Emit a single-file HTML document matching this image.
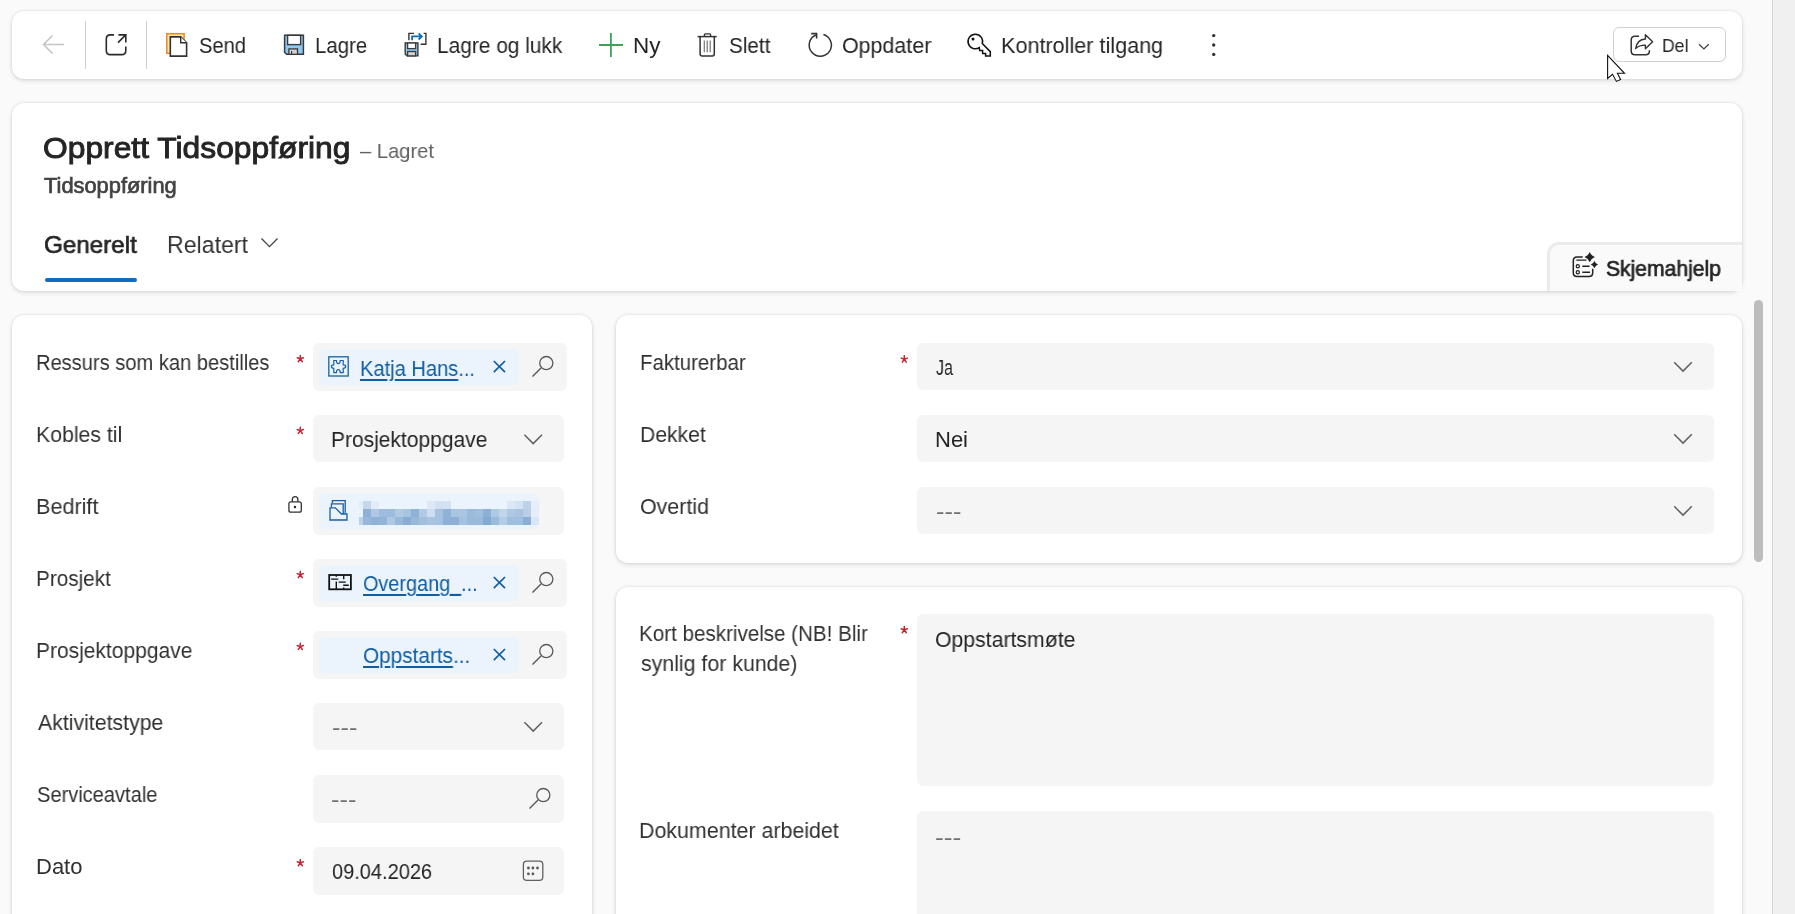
<!DOCTYPE html>
<html><head><meta charset="utf-8"><title>Opprett Tidsoppføring</title>
<style>
html,body{margin:0;padding:0;}
body{width:1795px;height:914px;overflow:hidden;position:relative;background:#fafafa;font-family:"Liberation Sans",sans-serif;}
.a{position:absolute;box-sizing:border-box;}
.t{position:absolute;white-space:nowrap;line-height:1;transform-origin:0 0;will-change:transform;}
.card{position:absolute;background:#fff;border-radius:12px;box-shadow:0 0 3px rgba(0,0,0,0.12),0 2px 5px rgba(0,0,0,0.10);}
.fld{position:absolute;background:#f5f5f5;border-radius:6px;}
.pill{position:absolute;background:#ebf3fc;border-radius:6px;}
.sep{position:absolute;width:1px;background:#d1d1d1;}
.ast{position:absolute;}

</style></head><body>
<div class="a" style="left:1772px;top:0;width:1px;height:914px;background:#d4d4d4"></div>
<div class="a" style="left:1773px;top:0;width:22px;height:914px;background:#f0f0f0"></div>
<div class="a" style="left:1754px;top:300px;width:9px;height:262px;border-radius:4.5px;background:#bdbdbd"></div>
<!-- toolbar -->
<div class="card" style="left:12px;top:11px;width:1730px;height:68px"></div>
<div class="sep" style="left:85px;top:21px;height:48px"></div>
<div class="sep" style="left:146px;top:21px;height:48px"></div>
<div class="a" style="left:1613px;top:27px;width:113px;height:35px;border:1px solid #d1d1d1;border-radius:6px"></div>
<!-- header -->
<div class="card" style="left:12px;top:103px;width:1730px;height:188px"></div>
<div class="a" style="left:45px;top:278px;width:92px;height:4px;border-radius:2px;background:#0f6cbd"></div>
<div class="a" style="left:1547px;top:242px;width:195px;height:49px;border:3px solid #ebebeb;border-right:none;border-bottom:none;border-top-left-radius:12px;background:#fafafa"></div>
<!-- cards -->
<div class="card" style="left:12px;top:315px;width:580px;height:700px"></div>
<div class="card" style="left:616px;top:315px;width:1126px;height:248px"></div>
<div class="card" style="left:616px;top:587px;width:1126px;height:500px"></div>
<!-- left fields -->
<div class="fld" style="left:313px;top:343px;width:254px;height:48px"></div>
<div class="fld" style="left:313px;top:415px;width:251px;height:47px"></div>
<div class="fld" style="left:313px;top:487px;width:251px;height:48px"></div>
<div class="fld" style="left:313px;top:559px;width:254px;height:48px"></div>
<div class="fld" style="left:313px;top:631px;width:254px;height:48px"></div>
<div class="fld" style="left:313px;top:703px;width:251px;height:47px"></div>
<div class="fld" style="left:313px;top:775px;width:251px;height:48px"></div>
<div class="fld" style="left:313px;top:847px;width:251px;height:48px"></div>
<div class="pill" style="left:319px;top:349px;width:200px;height:36px"></div>
<div class="pill" style="left:319px;top:493px;width:220px;height:36px"></div>
<div class="pill" style="left:319px;top:565px;width:200px;height:36px"></div>
<div class="pill" style="left:319px;top:637px;width:200px;height:36px"></div>
<!-- right fields -->
<div class="fld" style="left:917px;top:343px;width:797px;height:47px"></div>
<div class="fld" style="left:917px;top:415px;width:797px;height:47px"></div>
<div class="fld" style="left:917px;top:487px;width:797px;height:47px"></div>
<div class="fld" style="left:917px;top:614px;width:797px;height:172px"></div>
<div class="fld" style="left:917px;top:811px;width:797px;height:200px"></div>
<div class="a" style="left:359px;top:501px;width:4px;height:8px;background:#e3edf8"></div><div class="a" style="left:363px;top:501px;width:8px;height:8px;background:#c4d7ec"></div><div class="a" style="left:371px;top:501px;width:8px;height:8px;background:#e2ecf7"></div><div class="a" style="left:427px;top:501px;width:8px;height:8px;background:#dce8f5"></div><div class="a" style="left:435px;top:501px;width:8px;height:8px;background:#d2e1f1"></div><div class="a" style="left:443px;top:501px;width:8px;height:8px;background:#d4e2f1"></div><div class="a" style="left:507px;top:501px;width:8px;height:8px;background:#dde8f5"></div><div class="a" style="left:515px;top:501px;width:8px;height:8px;background:#d4e2f1"></div><div class="a" style="left:523px;top:501px;width:8px;height:8px;background:#bcd2ea"></div><div class="a" style="left:531px;top:501px;width:8px;height:8px;background:#e5eef9"></div><div class="a" style="left:363px;top:509px;width:8px;height:8px;background:#8cb0d6"></div><div class="a" style="left:371px;top:509px;width:8px;height:8px;background:#afc9e4"></div><div class="a" style="left:379px;top:509px;width:8px;height:8px;background:#9dbcdd"></div><div class="a" style="left:387px;top:509px;width:8px;height:8px;background:#9dbcdd"></div><div class="a" style="left:395px;top:509px;width:8px;height:8px;background:#b0cae4"></div><div class="a" style="left:403px;top:509px;width:8px;height:8px;background:#a7c4e1"></div><div class="a" style="left:411px;top:509px;width:8px;height:8px;background:#8fb2d7"></div><div class="a" style="left:419px;top:509px;width:8px;height:8px;background:#b1cbe5"></div><div class="a" style="left:427px;top:509px;width:8px;height:8px;background:#cddef0"></div><div class="a" style="left:435px;top:509px;width:8px;height:8px;background:#a5c3e0"></div><div class="a" style="left:443px;top:509px;width:8px;height:8px;background:#8fb2d7"></div><div class="a" style="left:451px;top:509px;width:8px;height:8px;background:#a9c5e1"></div><div class="a" style="left:459px;top:509px;width:8px;height:8px;background:#a9c5e1"></div><div class="a" style="left:467px;top:509px;width:8px;height:8px;background:#99badb"></div><div class="a" style="left:475px;top:509px;width:8px;height:8px;background:#a0bfde"></div><div class="a" style="left:483px;top:509px;width:8px;height:8px;background:#8eb0d6"></div><div class="a" style="left:491px;top:509px;width:8px;height:8px;background:#adc9e4"></div><div class="a" style="left:499px;top:509px;width:8px;height:8px;background:#c2d6eb"></div><div class="a" style="left:507px;top:509px;width:8px;height:8px;background:#afc9e4"></div><div class="a" style="left:515px;top:509px;width:8px;height:8px;background:#a9c4e1"></div><div class="a" style="left:523px;top:509px;width:8px;height:8px;background:#b9cfe8"></div><div class="a" style="left:531px;top:509px;width:8px;height:8px;background:#e4edf8"></div><div class="a" style="left:359px;top:517px;width:4px;height:8px;background:#bcd2ea"></div><div class="a" style="left:363px;top:517px;width:8px;height:8px;background:#97b7da"></div><div class="a" style="left:371px;top:517px;width:8px;height:8px;background:#8eb1d7"></div><div class="a" style="left:379px;top:517px;width:8px;height:8px;background:#93b4d8"></div><div class="a" style="left:387px;top:517px;width:8px;height:8px;background:#aec8e4"></div><div class="a" style="left:395px;top:517px;width:8px;height:8px;background:#98b9db"></div><div class="a" style="left:403px;top:517px;width:8px;height:8px;background:#89acd5"></div><div class="a" style="left:411px;top:517px;width:8px;height:8px;background:#99b9db"></div><div class="a" style="left:419px;top:517px;width:8px;height:8px;background:#a2c0de"></div><div class="a" style="left:427px;top:517px;width:8px;height:8px;background:#a8c4e1"></div><div class="a" style="left:435px;top:517px;width:8px;height:8px;background:#a5c2e0"></div><div class="a" style="left:443px;top:517px;width:8px;height:8px;background:#8eb0d6"></div><div class="a" style="left:451px;top:517px;width:8px;height:8px;background:#8eb0d6"></div><div class="a" style="left:459px;top:517px;width:8px;height:8px;background:#a5c2e0"></div><div class="a" style="left:467px;top:517px;width:8px;height:8px;background:#9abadc"></div><div class="a" style="left:475px;top:517px;width:8px;height:8px;background:#9abadc"></div><div class="a" style="left:483px;top:517px;width:8px;height:8px;background:#82abd3"></div><div class="a" style="left:491px;top:517px;width:8px;height:8px;background:#9bbbdb"></div><div class="a" style="left:499px;top:517px;width:8px;height:8px;background:#b4cce6"></div><div class="a" style="left:507px;top:517px;width:8px;height:8px;background:#a0bfde"></div><div class="a" style="left:515px;top:517px;width:8px;height:8px;background:#a0bfde"></div><div class="a" style="left:523px;top:517px;width:8px;height:8px;background:#8aaed6"></div><div class="a" style="left:531px;top:517px;width:8px;height:8px;background:#d9e6f5"></div>
<span class="t" style="left:199.24px;top:35.38px;font-size:22px;color:#242424;transform:scaleX(0.9117);">Send</span>
<span class="t" style="left:315.10px;top:35.38px;font-size:22px;color:#242424;transform:scaleX(0.9279);">Lagre</span>
<span class="t" style="left:437.06px;top:35.38px;font-size:22px;color:#242424;transform:scaleX(0.9492);">Lagre og lukk</span>
<span class="t" style="left:632.52px;top:35.38px;font-size:22px;color:#242424;transform:scaleX(1.0201);">Ny</span>
<span class="t" style="left:729.36px;top:35.38px;font-size:22px;color:#242424;transform:scaleX(0.9395);">Slett</span>
<span class="t" style="left:841.74px;top:35.38px;font-size:22px;color:#242424;transform:scaleX(0.9734);">Oppdater</span>
<span class="t" style="left:1001.40px;top:35.38px;font-size:22px;color:#242424;transform:scaleX(0.9820);">Kontroller tilgang</span>
<span class="t" style="left:1662.28px;top:37.34px;font-size:18.5px;color:#242424;transform:scaleX(0.9511);">Del</span>
<span class="t" style="left:43.20px;top:132.83px;font-size:29.5px;color:#242424;transform:scaleX(1.0775);-webkit-text-stroke:0.9px #242424;">Opprett Tidsoppføring</span>
<span class="t" style="left:360.00px;top:140.22px;font-size:21px;color:#616161;transform:scaleX(0.9598);">– Lagret</span>
<span class="t" style="left:44.00px;top:176.00px;font-size:21.5px;color:#424242;transform:scaleX(1.0161);-webkit-text-stroke:0.7px #424242;">Tidsoppføring</span>
<span class="t" style="left:44.20px;top:233.06px;font-size:24.5px;color:#242424;transform:scaleX(0.9872);-webkit-text-stroke:0.7px #242424;">Generelt</span>
<span class="t" style="left:166.56px;top:233.26px;font-size:24.5px;color:#323232;transform:scaleX(0.9443);">Relatert</span>
<span class="t" style="left:1606.36px;top:258.80px;font-size:21.5px;color:#242424;transform:scaleX(0.9804);-webkit-text-stroke:0.7px #242424;">Skjemahjelp</span>
<span class="t" style="left:36.40px;top:352.38px;font-size:22px;color:#323130;transform:scaleX(0.9135);">Ressurs som kan bestilles</span>
<span class="t" style="left:36.40px;top:424.38px;font-size:22px;color:#323130;transform:scaleX(0.9653);">Kobles til</span>
<span class="t" style="left:36.40px;top:496.38px;font-size:22px;color:#323130;transform:scaleX(0.9811);">Bedrift</span>
<span class="t" style="left:36.40px;top:568.38px;font-size:22px;color:#323130;transform:scaleX(0.9426);">Prosjekt</span>
<span class="t" style="left:36.40px;top:640.38px;font-size:22px;color:#323130;transform:scaleX(0.9535);">Prosjektoppgave</span>
<span class="t" style="left:38.00px;top:712.38px;font-size:22px;color:#323130;transform:scaleX(0.9668);">Aktivitetstype</span>
<span class="t" style="left:37.20px;top:784.38px;font-size:22px;color:#323130;transform:scaleX(0.9120);">Serviceavtale</span>
<span class="t" style="left:36.40px;top:856.38px;font-size:22px;color:#323130;transform:scaleX(0.9953);">Dato</span>
<span class="t" style="left:639.56px;top:352.38px;font-size:22px;color:#323130;transform:scaleX(0.9291);">Fakturerbar</span>
<span class="t" style="left:639.56px;top:424.38px;font-size:22px;color:#323130;transform:scaleX(0.9620);">Dekket</span>
<span class="t" style="left:640.36px;top:496.38px;font-size:22px;color:#323130;transform:scaleX(0.9729);">Overtid</span>
<span class="t" style="left:639.06px;top:623.38px;font-size:22px;color:#323130;transform:scaleX(0.9359);">Kort beskrivelse (NB! Blir</span>
<span class="t" style="left:640.66px;top:652.88px;font-size:22px;color:#323130;transform:scaleX(0.9693);">synlig for kunde)</span>
<span class="t" style="left:639.06px;top:820.38px;font-size:22px;color:#323130;transform:scaleX(0.9726);">Dokumenter arbeidet</span>
<span class="t" style="left:360.40px;top:358.38px;font-size:22px;color:#115ea3;transform:scaleX(0.9127);"><u style="text-decoration-thickness:2px;text-underline-offset:3px">Katja Hans</u>...</span>
<span class="t" style="left:331.40px;top:429.38px;font-size:22px;color:#242424;transform:scaleX(0.9535);">Prosjektoppgave</span>
<span class="t" style="left:363.20px;top:573.38px;font-size:22px;color:#115ea3;transform:scaleX(0.9017);"><u style="text-decoration-thickness:2px;text-underline-offset:3px">Overgang_</u>...</span>
<span class="t" style="left:363.20px;top:645.38px;font-size:22px;color:#115ea3;transform:scaleX(0.9435);"><u style="text-decoration-thickness:2px;text-underline-offset:3px">Oppstarts</u>...</span>
<span class="t" style="left:332.20px;top:717.38px;font-size:22px;color:#707070;transform:scaleX(1.1545);">---</span>
<span class="t" style="left:331.20px;top:789.38px;font-size:22px;color:#707070;transform:scaleX(1.1545);">---</span>
<span class="t" style="left:331.74px;top:861.38px;font-size:22px;color:#242424;transform:scaleX(0.9092);">09.04.2026</span>
<span class="t" style="left:936.00px;top:357.38px;font-size:22px;color:#242424;transform:scaleX(0.7313);">Ja</span>
<span class="t" style="left:935.44px;top:429.38px;font-size:22px;color:#242424;transform:scaleX(0.9909);">Nei</span>
<span class="t" style="left:936.24px;top:501.38px;font-size:22px;color:#707070;transform:scaleX(1.1545);">---</span>
<span class="t" style="left:935.20px;top:629.38px;font-size:22px;color:#242424;transform:scaleX(0.9652);">Oppstartsmøte</span>
<span class="t" style="left:935.20px;top:827.38px;font-size:22px;color:#707070;transform:scaleX(1.2000);">---</span>
<svg class="a" style="left:0;top:0" width="1795" height="914" viewBox="0 0 1795 914"><path d="M43.5 44.5H64M52.5 35.5L43.5 44.5L52.5 53.5" stroke="#c4c4c4" stroke-width="1.5" fill="none"/><path d="M114 34.9H110.5Q106.3 34.9 106.3 39.1V50.4Q106.3 54.6 110.5 54.6H121.6Q125.8 54.6 125.8 50.4V46.5" stroke="#2a2a2a" stroke-width="1.6" fill="none"/><path d="M118 42.6L125.8 34.9M118.5 34.9H125.8V42.6" stroke="#2a2a2a" stroke-width="1.6" fill="none"/><rect x="166.8" y="33.7" width="17.3" height="19.6" fill="#fde8a8" stroke="#e8872b" stroke-width="1.5"/><path d="M170.3 36.9H180.7L186.6 42.8V56.1H170.3Z" fill="#fff" stroke="#333" stroke-width="1.6"/><path d="M180.7 36.9V42.8H186.6" fill="#fff" stroke="#333" stroke-width="1.4"/><path d="M284.6 35.3H303.4V54.3H286.6L284.6 52.3Z" fill="#8dcaf6" stroke="#3a3a3a" stroke-width="1.5"/><rect x="287.6" y="35.3" width="13" height="9.3" fill="#fff" stroke="#3a3a3a" stroke-width="1.4"/><rect x="288.9" y="48.9" width="8.6" height="5.4" fill="#d2d2d2" stroke="#3a3a3a" stroke-width="1.3"/><path d="M291.6 51V54.3" stroke="#3a3a3a" stroke-width="1.2"/><path d="M405.2 43H417.9V55.9H407L405.2 54.1Z" fill="#8dcaf6" stroke="#3a3a3a" stroke-width="1.4"/><rect x="407.6" y="43" width="8" height="5.6" fill="#fff" stroke="#3a3a3a" stroke-width="1.3"/><rect x="407.6" y="51.5" width="8" height="4.4" fill="#d2d2d2" stroke="#3a3a3a" stroke-width="1.3"/><path d="M414 33.4H408.9V40.2M423.6 33.4H425.9V44.3H420.6" stroke="#333" stroke-width="1.4" fill="none"/><path d="M412.1 40.3V36.4H421.5M418.6 33.3L421.8 36.4L418.6 39.5" stroke="#0f6cbd" stroke-width="1.8" fill="none"/><path d="M610.9 33V57M599 45H623" stroke="#3aa357" stroke-width="1.8"/><path d="M697.6 36.6H716.7" stroke="#333" stroke-width="1.5"/><path d="M704.4 36.6V34.9Q704.4 33.9 705.4 33.9H709.6Q710.6 33.9 710.6 34.9V36.6" stroke="#333" stroke-width="1.4" fill="none"/><path d="M700.1 36.6V53.9Q700.1 55.9 702.1 55.9H712.3Q714.3 55.9 714.3 53.9V36.6" stroke="#333" stroke-width="1.5" fill="none"/><path d="M704.3 40.6V52.2M707.2 40.6V52.2M710.2 40.6V52.2" stroke="#777" stroke-width="1.2"/><path d="M823.4 34.5A11.1 11.1 0 1 1 815.8 35" stroke="#333" stroke-width="1.5" fill="none"/><path d="M811.2 33.6H816.6V38.6" stroke="#333" stroke-width="1.6" fill="none"/><path d="M979.3 47.6A7.3 7.3 0 1 1 982.3 43.6L990.3 51.6V55.9H985.6V53.4H982.6V50.4H979.6Z" stroke="#111" stroke-width="1.5" fill="none" stroke-linejoin="miter"/><circle cx="973" cy="39" r="1.5" fill="#111"/><circle cx="1213.7" cy="35.6" r="1.7" fill="#333"/><circle cx="1213.7" cy="45" r="1.7" fill="#333"/><circle cx="1213.7" cy="54.4" r="1.7" fill="#333"/><path d="M1639 36.3H1635Q1631.2 36.3 1631.2 40.1V50.9Q1631.2 54.7 1635 54.7H1645.6Q1649.4 54.7 1649.4 50.9V50.3" stroke="#333" stroke-width="1.5" fill="none"/><path d="M1635.6 48.6C1636.6 42.6 1640 39.3 1645.4 39V34.8L1652.6 41.8L1645.4 48.8V45.1C1641 45 1638.3 46 1635.6 48.6Z" stroke="#333" stroke-width="1.4" fill="none" stroke-linejoin="round"/><path d="M1699 44.2L1703.9 48.9L1708.8 44.2" stroke="#424242" stroke-width="1.3" fill="none"/><path d="M1607.6 55.3V78.5L1612.5 74.3L1616.4 81.4L1620.6 79.5L1617.4 73.3H1624.5Z" fill="#fff" stroke="#111" stroke-width="1.1" stroke-linejoin="miter"/><path d="M261.5 238.5L269.5 246.6L277.5 238.5" stroke="#424242" stroke-width="1.3" fill="none"/><path d="M1582.7 256.9H1577.1Q1573.3 256.9 1573.3 260.7V272.7Q1573.3 276.5 1577.1 276.5H1588.9Q1592.7 276.5 1592.7 272.7V268.8" stroke="#222" stroke-width="1.5" fill="none"/><path d="M1576.3 260.1H1586.5M1582.3 266.2H1589.6M1582.3 272.2H1590" stroke="#222" stroke-width="1.4"/><circle cx="1577.8" cy="266.2" r="1.6" stroke="#222" stroke-width="1.2" fill="none"/><circle cx="1577.8" cy="272.2" r="1.6" stroke="#222" stroke-width="1.2" fill="none"/><path d="M1589.7 251.90000000000003Q1591.1000000000001 255.70000000000002 1594.9 257.1Q1591.1000000000001 258.5 1589.7 262.3Q1588.3 258.5 1584.5 257.1Q1588.3 255.70000000000002 1589.7 251.90000000000003Z" fill="#222"/><path d="M1594.4 261.0Q1595.4 263.6 1598.0 264.6Q1595.4 265.6 1594.4 268.20000000000005Q1593.4 265.6 1590.8000000000002 264.6Q1593.4 263.6 1594.4 261.0Z" fill="#222"/><rect x="328.8" y="356.8" width="19.4" height="19.2" stroke="#1a5fa6" stroke-width="1.3" fill="none"/><path d="M333.8 360.5H336.4Q336.4 363.6 338.3 363.6Q340.2 363.6 340.2 360.5H343.2V364.9Q345.7 364.9 345.7 366.6Q345.7 368.3 343.2 368.3V372.6H340.2Q340.2 369.5 338.3 369.5Q336.4 369.5 336.4 372.6H333.8V368.3Q331.4 368.3 331.4 366.6Q331.4 364.9 333.8 364.9Z" stroke="#1a5fa6" stroke-width="1.2" fill="none"/><path d="M493.8 361L505 372.1M505 361L493.8 372.1" stroke="#115ea3" stroke-width="1.7"/><path d="M493.8 649L505 660.1M505 649L493.8 660.1" stroke="#115ea3" stroke-width="1.7"/><path d="M493.8 577L505 588.1M505 577L493.8 588.1" stroke="#115ea3" stroke-width="1.7"/><circle cx="546.3" cy="363.1" r="6.6" stroke="#5a5a5a" stroke-width="1.3" fill="none"/><path d="M541.0 367.90000000000003L532.5 376.40000000000003" stroke="#5a5a5a" stroke-width="1.4"/><circle cx="546.3" cy="579.1" r="6.6" stroke="#5a5a5a" stroke-width="1.3" fill="none"/><path d="M541.0 583.9L532.5 592.4" stroke="#5a5a5a" stroke-width="1.4"/><circle cx="546.3" cy="651.1" r="6.6" stroke="#5a5a5a" stroke-width="1.3" fill="none"/><path d="M541.0 655.9L532.5 664.4" stroke="#5a5a5a" stroke-width="1.4"/><circle cx="543.3" cy="795.1" r="6.6" stroke="#5a5a5a" stroke-width="1.3" fill="none"/><path d="M538.0 799.9L529.5 808.4" stroke="#5a5a5a" stroke-width="1.4"/><path d="M524.4000000000001 434.8L533.2 443.6L542.0 434.8" stroke="#616161" stroke-width="1.5" fill="none"/><path d="M524.4000000000001 722.3L533.2 731.0999999999999L542.0 722.3" stroke="#616161" stroke-width="1.5" fill="none"/><path d="M1674.2 362.3L1683 371.1L1691.8 362.3" stroke="#616161" stroke-width="1.5" fill="none"/><path d="M1674.2 434.3L1683 443.1L1691.8 434.3" stroke="#616161" stroke-width="1.5" fill="none"/><path d="M1674.2 506.3L1683 515.1L1691.8 506.3" stroke="#616161" stroke-width="1.5" fill="none"/><rect x="288.9" y="501.8" width="12.4" height="10.4" rx="2" stroke="#333" stroke-width="1.3" fill="none"/><path d="M292.3 501.8V499.7Q292.3 496.6 295.1 496.6Q297.9 496.6 297.9 499.7V501.8" stroke="#333" stroke-width="1.3" fill="none"/><circle cx="295" cy="507" r="1.2" fill="#222"/><path d="M332.4 503.2V500.7H345.2V513" stroke="#1a5fa6" stroke-width="1.3" fill="none"/><path d="M331.4 507.3V503.8H343.2V517" stroke="#1a5fa6" stroke-width="1.3" fill="none"/><path d="M330 507.9H335.3L341.5 514H347V520H330Z" stroke="#1a5fa6" stroke-width="1.3" fill="#ebf3fc"/><rect x="329.2" y="575" width="21.7" height="14.3" stroke="#111" stroke-width="1.8" fill="none"/><path d="M336.3 575V576.7M336.3 581.4V589.3M343.7 575V579.3M343.7 587.5V589.3M331.1 579.1H338.3M338.6 582.1H345.8M343.2 585.2H348.8" stroke="#111" stroke-width="1.4"/><rect x="523.4" y="861.2" width="19.4" height="19.2" rx="3.4" stroke="#616161" stroke-width="1.3" fill="none"/><circle cx="528.4" cy="868" r="1.4" fill="#5a5a5a"/><circle cx="532.9" cy="868" r="1.4" fill="#5a5a5a"/><circle cx="537.5" cy="868" r="1.4" fill="#5a5a5a"/><circle cx="528.4" cy="873.9" r="1.4" fill="#5a5a5a"/><circle cx="532.9" cy="873.9" r="1.4" fill="#5a5a5a"/><path d="M300.3 358.8L300.30 355.40M300.3 358.8L297.20 357.70M300.3 358.8L303.40 357.70M300.3 358.8L298.30 361.70M300.3 358.8L302.30 361.70" stroke="#c0262f" stroke-width="1.5" stroke-linecap="round"/><path d="M300.3 430.6L300.30 427.20M300.3 430.6L297.20 429.50M300.3 430.6L303.40 429.50M300.3 430.6L298.30 433.50M300.3 430.6L302.30 433.50" stroke="#c0262f" stroke-width="1.5" stroke-linecap="round"/><path d="M300.3 574.7L300.30 571.30M300.3 574.7L297.20 573.60M300.3 574.7L303.40 573.60M300.3 574.7L298.30 577.60M300.3 574.7L302.30 577.60" stroke="#c0262f" stroke-width="1.5" stroke-linecap="round"/><path d="M300.3 646.6L300.30 643.20M300.3 646.6L297.20 645.50M300.3 646.6L303.40 645.50M300.3 646.6L298.30 649.50M300.3 646.6L302.30 649.50" stroke="#c0262f" stroke-width="1.5" stroke-linecap="round"/><path d="M300.3 862.9L300.30 859.50M300.3 862.9L297.20 861.80M300.3 862.9L303.40 861.80M300.3 862.9L298.30 865.80M300.3 862.9L302.30 865.80" stroke="#c0262f" stroke-width="1.5" stroke-linecap="round"/><path d="M904.3 359.2L904.30 355.80M904.3 359.2L901.20 358.10M904.3 359.2L907.40 358.10M904.3 359.2L902.30 362.10M904.3 359.2L906.30 362.10" stroke="#c0262f" stroke-width="1.5" stroke-linecap="round"/><path d="M904.3 629.8L904.30 626.40M904.3 629.8L901.20 628.70M904.3 629.8L907.40 628.70M904.3 629.8L902.30 632.70M904.3 629.8L906.30 632.70" stroke="#c0262f" stroke-width="1.5" stroke-linecap="round"/></svg>
</body></html>
